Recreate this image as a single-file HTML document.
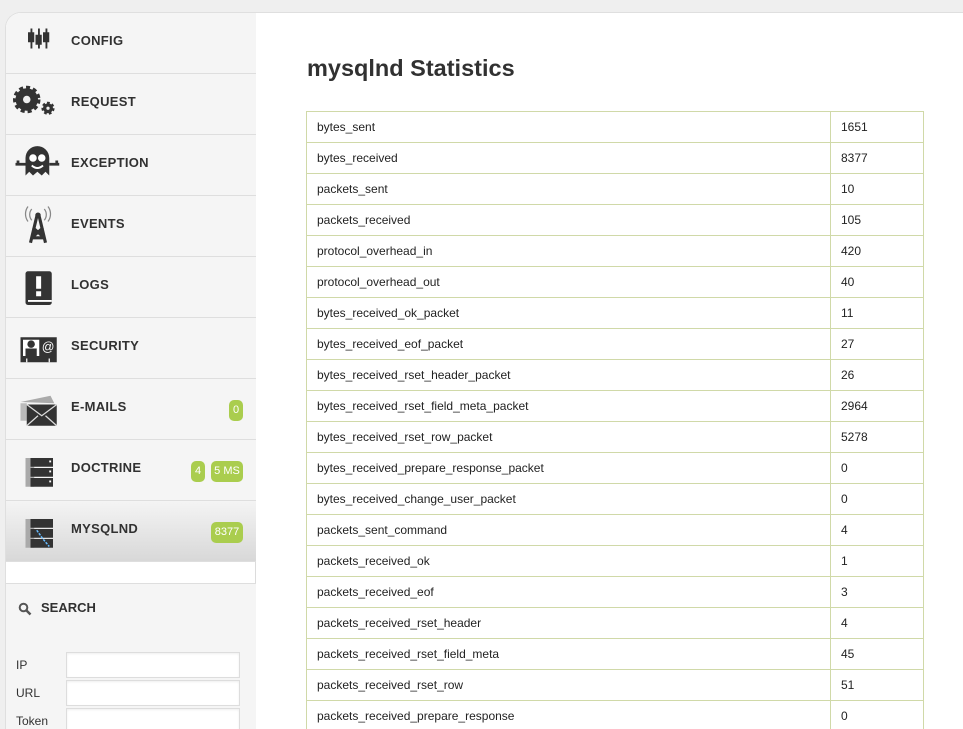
<!DOCTYPE html>
<html><head><meta charset="utf-8"><style>
*{margin:0;padding:0;box-sizing:border-box}
body{width:963px;height:729px;overflow:hidden;background:#efefef;font-family:"Liberation Sans",Arial,sans-serif;position:relative}
#wrap{position:absolute;left:5px;top:12px;width:958px;height:717px;background:#fff;border:1px solid #dfdfdf;border-right:none;border-bottom:none;border-radius:16px 0 0 0;overflow:hidden}
#side{position:absolute;left:0;top:0;width:250px;height:717px;background:#fff;border-right:1px solid #dcdcdc}
.it{position:absolute;left:0;width:250px;height:61px;background:#f5f5f5;border-bottom:1px solid #dedede}
.it .lb{position:absolute;left:65px;top:20px;font-size:13px;font-weight:bold;color:#313131;letter-spacing:.3px}
.it svg{position:absolute;left:4px;top:3px}
.bd{position:absolute;top:21px;height:21px;background:#aacd4e;color:#fff;font-size:11px;border-radius:5px;line-height:21px;text-align:center}
.act{background:linear-gradient(#f4f4f4,#d8d8d8)}
#search{position:absolute;left:0;top:570px;width:250px;height:160px;background:#f5f5f5;border-top:1px solid #dedede}
#search .t{position:absolute;left:35px;top:16px;font-size:13px;font-weight:bold;color:#313131}
.f{position:absolute;left:10px;font-size:12px;color:#313131}
.in{position:absolute;left:60px;width:174px;height:26px;background:#fff;border:1px solid #ddd;box-shadow:inset 0 1px 2px #eee}
h2{position:absolute;left:301px;top:42px;font-size:23.5px;font-weight:bold;color:#313131}
table{position:absolute;left:300px;top:98px;border-collapse:collapse;width:618px}
td{border:1px solid #d0d9a8;height:31px;font-size:12px;color:#222;padding:0 10px}
td+td{width:93px}
</style></head><body>
<div id="wrap">
<div id="side">
<div class="it" style="top:0"><svg width="56" height="50" viewBox="0 0 44 40"><g fill="#333"><rect x="14" y="13" width="5" height="8"/><rect x="20" y="15" width="5" height="8"/><rect x="26" y="13" width="5" height="8"/><rect x="16" y="10" width="1.5" height="16"/><rect x="22" y="10" width="1.5" height="16"/><rect x="28" y="10" width="1.5" height="16"/></g></svg><div class="lb">CONFIG</div></div>
<div class="it" style="top:61px"><svg width="56" height="50" viewBox="0 0 44 40"><circle cx="13" cy="18" r="9" fill="#333" stroke="#333" stroke-width="4" stroke-dasharray="3 2.2"/><circle cx="13" cy="18" r="3" fill="#eee"/><circle cx="30" cy="25" r="4" fill="#333" stroke="#333" stroke-width="2.5" stroke-dasharray="2 1.6"/><circle cx="30" cy="25" r="1.3" fill="#eee"/></svg><div class="lb">REQUEST</div></div>
<div class="it" style="top:122px"><svg width="56" height="50" viewBox="0 0 44 40"><path d="M12 30 V16 a9.5 9.5 0 0 1 19 0 V30 l-3-3-3 3-3.5-3-3.5 3-3-3z" fill="#333"/><circle cx="18" cy="16" r="3" fill="#fff"/><circle cx="25" cy="16" r="3" fill="#fff"/><path d="M17 22 q4.5 4 9 0" stroke="#fff" stroke-width="1.5" fill="none"/><path d="M4 21 h8 M6 18 v4 M31 21 h8 M37 18 v4" stroke="#333" stroke-width="2.2"/></svg><div class="lb">EXCEPTION</div></div>
<div class="it" style="top:183px"><svg width="56" height="50" viewBox="0 0 44 40"><path d="M21 14 L16 35 M23 14 L28 35 M17 27 h10 M16 31 h12 M18 23 l9 8 M26 23 l-9 8" stroke="#333" stroke-width="2.5" fill="none"/><circle cx="22" cy="13" r="2.2" fill="#333"/><path d="M17 8 a7 7 0 0 0 0 9 M14 6 a10 10 0 0 0 0 12 M27 8 a7 7 0 0 1 0 9 M30 6 a10 10 0 0 1 0 12" stroke="#888" fill="none"/></svg><div class="lb">EVENTS</div></div>
<div class="it" style="top:244px"><svg width="56" height="50" viewBox="0 0 44 40"><rect x="12" y="9" width="21" height="27" rx="2" fill="#333"/><rect x="20.5" y="13" width="4" height="10" fill="#fff"/><rect x="20.5" y="25" width="4" height="4" fill="#fff"/><rect x="14" y="32" width="19" height="1.5" fill="#fff"/></svg><div class="lb">LOGS</div></div>
<div class="it" style="top:305px"><svg width="56" height="50" viewBox="0 0 44 40"><rect x="8" y="13" width="29" height="20" fill="#333"/><rect x="10" y="15" width="13" height="13" fill="#fff"/><circle cx="16.5" cy="18.5" r="3" fill="#333"/><rect x="12" y="22" width="9" height="6" fill="#333"/><text x="25" y="24" font-size="10" fill="#fff" font-family="Liberation Sans">@</text><path d="M13 30 v3 M31 30 v3" stroke="#fff"/></svg><div class="lb">SECURITY</div></div>
<div class="it" style="top:366px"><svg width="56" height="50" viewBox="0 0 44 40"><path d="M8 16 l24-5 3 6 z" fill="#aaa"/><rect x="8" y="17" width="5" height="14" fill="#bbb"/><rect x="13" y="18" width="24" height="17" fill="#333"/><path d="M13 18 l12 9 12-9 M13 35 l9-8 M37 35 l-9-8" stroke="#ddd" fill="none"/></svg><div class="lb">E-MAILS</div><div class="bd" style="left:223px;width:14px">0</div></div>
<div class="it" style="top:427px"><svg width="56" height="50" viewBox="0 0 44 40"><rect x="12" y="12" width="7" height="23" fill="#aaa"/><g fill="#333"><rect x="16" y="12" width="18" height="7"/><rect x="16" y="20" width="18" height="7"/><rect x="16" y="28" width="18" height="7"/></g><g fill="#fff"><rect x="31" y="14" width="1.5" height="1.5"/><rect x="31" y="22" width="1.5" height="1.5"/><rect x="31" y="30" width="1.5" height="1.5"/></g></svg><div class="lb">DOCTRINE</div><div class="bd" style="left:185px;width:14px">4</div><div class="bd" style="left:205px;width:32px">5 MS</div></div>
<div class="it act" style="top:488px"><svg width="56" height="50" viewBox="0 0 44 40"><rect x="12" y="12" width="7" height="23" fill="#aaa"/><g fill="#333"><rect x="16" y="12" width="18" height="7"/><rect x="16" y="20" width="18" height="7"/><rect x="16" y="28" width="18" height="7"/></g><path d="M21 21 l5 7 5 6" stroke="#6bf" stroke-width="1.2" stroke-dasharray="2 1" fill="none"/></svg><div class="lb">MYSQLND</div><div class="bd" style="left:205px;width:32px">8377</div></div>
<div id="search"><svg style="position:absolute;left:12px;top:18px" width="14" height="14" viewBox="0 0 14 14"><circle cx="5.5" cy="5.5" r="3.8" stroke="#555" stroke-width="2" fill="none"/><path d="M8.5 8.5 l4 4" stroke="#555" stroke-width="2.5"/></svg><div class="t">SEARCH</div>
<div class="f" style="top:74px">IP</div><div class="in" style="top:68px"></div>
<div class="f" style="top:102px">URL</div><div class="in" style="top:96px"></div>
<div class="f" style="top:130px">Token</div><div class="in" style="top:124px"></div>
</div>
</div>
<h2>mysqlnd Statistics</h2>
<table>
<tr><td>bytes_sent</td><td>1651</td></tr>
<tr><td>bytes_received</td><td>8377</td></tr>
<tr><td>packets_sent</td><td>10</td></tr>
<tr><td>packets_received</td><td>105</td></tr>
<tr><td>protocol_overhead_in</td><td>420</td></tr>
<tr><td>protocol_overhead_out</td><td>40</td></tr>
<tr><td>bytes_received_ok_packet</td><td>11</td></tr>
<tr><td>bytes_received_eof_packet</td><td>27</td></tr>
<tr><td>bytes_received_rset_header_packet</td><td>26</td></tr>
<tr><td>bytes_received_rset_field_meta_packet</td><td>2964</td></tr>
<tr><td>bytes_received_rset_row_packet</td><td>5278</td></tr>
<tr><td>bytes_received_prepare_response_packet</td><td>0</td></tr>
<tr><td>bytes_received_change_user_packet</td><td>0</td></tr>
<tr><td>packets_sent_command</td><td>4</td></tr>
<tr><td>packets_received_ok</td><td>1</td></tr>
<tr><td>packets_received_eof</td><td>3</td></tr>
<tr><td>packets_received_rset_header</td><td>4</td></tr>
<tr><td>packets_received_rset_field_meta</td><td>45</td></tr>
<tr><td>packets_received_rset_row</td><td>51</td></tr>
<tr><td>packets_received_prepare_response</td><td>0</td></tr>
<tr><td>packets_received_change_user</td><td>0</td></tr>
</table>
</div>
</body></html>
